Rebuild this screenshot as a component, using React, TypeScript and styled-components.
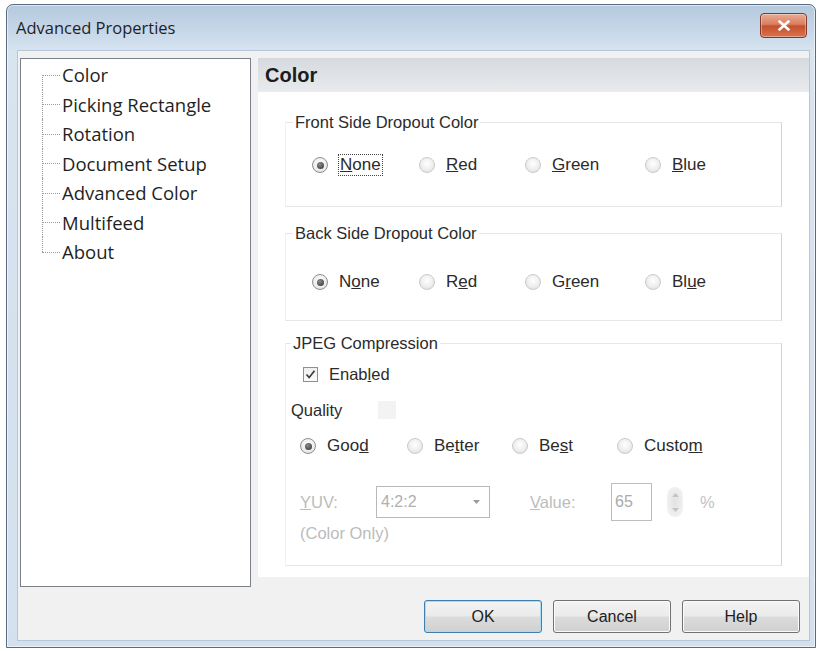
import React from "react";
import styled, { createGlobalStyle } from "styled-components";

const GlobalStyle = createGlobalStyle`
  html, body { margin: 0; padding: 0; background: #ffffff; }
  body { font-family: "Liberation Sans", Arial, sans-serif; color: #2b2b2b; }
  * { box-sizing: border-box; }
`;

const Page = styled.div`
  height: 651px;
  padding: 4px 4px 3px 6px;
`;

const Window = styled.div`
  height: 644px;
  display: flex;
  flex-direction: column;
  border: 1px solid #5a6b7d;
  border-radius: 7px 7px 0 0;
  background: linear-gradient(180deg, #b5c9de 0px, #c6d7e8 26px, #d8e4f0 46px, #d3e0ed 100%);
  box-shadow: inset 0 0 0 1px rgba(255, 255, 255, 0.55);
`;

const TitleBar = styled.div`
  height: 45px;
  flex: none;
  display: flex;
  align-items: center;
  justify-content: space-between;
  padding: 0 8px 0 9px;
`;

const Title = styled.span`
  font-family: "Open Sans", "Liberation Sans", sans-serif;
  font-size: 16.5px;
  color: #1f1f1f;
`;

const CloseButton = styled.div`
  align-self: flex-start;
  margin-top: 8px;
  width: 47px;
  height: 25px;
  display: flex;
  align-items: center;
  justify-content: center;
  border: 1px solid #7d3b2c;
  border-radius: 4px;
  background: linear-gradient(180deg, #e9ad94 0%, #da7d5e 45%, #c5502e 52%, #d8744b 100%);
  box-shadow: inset 0 0 0 1px rgba(255, 255, 255, 0.35);
`;

const Client = styled.div`
  flex: 1;
  margin: 0 5px 6px 10px;
  padding: 7px 0 0 2px;
  border: 1px solid #b7c7d7;
  background: #f1f1f1;
  display: flex;
  flex-direction: column;
`;

const MainRow = styled.div`
  display: flex;
  align-items: flex-start;
  gap: 7px;
`;

const Tree = styled.div`
  width: 231px;
  height: 529px;
  flex: none;
  padding-top: 1px;
  border: 1px solid #7b8088;
  background: #ffffff;
`;

const TreeItem = styled.div`
  height: 29.5px;
  display: flex;
  align-items: stretch;
  font-family: "Open Sans", "Liberation Sans", sans-serif;
  font-size: 18.5px;
  color: #1f1f1f;
`;

const Connector = styled.span<{ $first?: boolean; $last?: boolean }>`
  position: relative;
  width: 18px;
  margin-left: 21px;
  flex: none;
  &::before {
    content: "";
    position: absolute;
    left: 0;
    top: ${(p) => (p.$first ? "50%" : "0")};
    bottom: ${(p) => (p.$last ? "50%" : "0")};
    border-left: 1px dotted #9a9a9a;
  }
  &::after {
    content: "";
    position: absolute;
    left: 0;
    right: 0;
    top: 50%;
    border-top: 1px dotted #9a9a9a;
  }
`;

const TreeLabel = styled.span`
  display: flex;
  align-items: center;
  padding-left: 2px;
`;

const Panel = styled.div`
  flex: 1;
  height: 519px;
  display: flex;
  flex-direction: column;
  background: #ffffff;
`;

const PanelHeader = styled.div`
  height: 34px;
  flex: none;
  display: flex;
  align-items: center;
  padding-left: 7px;
  background: linear-gradient(180deg, #d6dadf 0%, #dfe2e6 50%, #e9ebed 100%);
  font-size: 20px;
  font-weight: bold;
  color: #1c1c1c;
`;

const PanelBody = styled.div`
  flex: 1;
  padding: 0 27px;
`;

const Group = styled.fieldset<{ $top: number; $pt: number; $pb: number }>`
  margin: ${(p) => p.$top}px 0 0 0;
  padding: ${(p) => p.$pt}px 0 ${(p) => p.$pb}px 0;
  min-width: 0;
  border: 1px solid #e6e6e6;
  border-left-color: #f0f0f0;
  border-right-color: #d4d4d4;
`;

const Legend = styled.legend<{ $indent: number }>`
  margin-left: ${(p) => p.$indent}px;
  padding: 0 2px;
  font-size: 16.5px;
  line-height: 20px;
  color: #2b2b2b;
`;

const RadioRow = styled.div<{ $cols: string; $indent: number }>`
  display: grid;
  grid-template-columns: ${(p) => p.$cols};
  padding-left: ${(p) => p.$indent}px;
  height: 20px;
  align-items: center;
`;

const Option = styled.label`
  display: flex;
  align-items: center;
  gap: 11px;
  font-size: 17px;
  color: #2b2b2b;
  white-space: nowrap;
`;

const RadioDot = styled.span<{ $checked?: boolean }>`
  width: 16px;
  height: 16px;
  flex: none;
  border-radius: 50%;
  display: flex;
  align-items: center;
  justify-content: center;
  border: 1px solid ${(p) => (p.$checked ? "#8d8e8f" : "#cacaca")};
  background: radial-gradient(circle at 50% 40%, #ffffff 0%, #eeeeee 55%, #d9d9d9 100%);
  &::after {
    content: "";
    display: ${(p) => (p.$checked ? "block" : "none")};
    width: 7px;
    height: 7px;
    border-radius: 50%;
    background: radial-gradient(circle at 40% 35%, #8c8c8c, #2e2e2e);
  }
`;

const Focus = styled.span`
  outline: 1px dotted #444;
  outline-offset: 0;
  padding: 0 1px;
`;

const Row = styled.div<{ $top: number; $indent: number; $height?: number }>`
  display: flex;
  align-items: center;
  margin-top: ${(p) => p.$top}px;
  padding-left: ${(p) => p.$indent}px;
  height: ${(p) => p.$height ?? 20}px;
  font-size: 16.5px;
`;

const CheckBox = styled.span`
  width: 15px;
  height: 15px;
  flex: none;
  margin-right: 11px;
  display: flex;
  align-items: center;
  justify-content: center;
  border: 1px solid #8f8f8f;
  background: linear-gradient(180deg, #eeeeee, #fbfbfb);
`;

const GhostBox = styled.span`
  width: 18px;
  height: 18px;
  margin-left: 36px;
  background: #f3f3f3;
`;

const Disabled = styled.span<{ $width?: number; $gap?: number }>`
  color: #bcbcbc;
  width: ${(p) => (p.$width ? `${p.$width}px` : "auto")};
  margin-left: ${(p) => p.$gap ?? 0}px;
  flex: none;
`;

const SelectBox = styled.div`
  width: 114px;
  height: 32px;
  flex: none;
  display: flex;
  align-items: center;
  justify-content: space-between;
  padding: 0 9px 0 4px;
  border: 1px solid #b8b8b8;
  background: #ffffff;
  color: #b0b0b0;
  font-size: 16px;
`;

const ValueBox = styled.div`
  width: 41px;
  height: 38px;
  flex: none;
  display: flex;
  align-items: center;
  padding-left: 3px;
  border: 1px solid #bdbdbd;
  color: #ababab;
  font-size: 16px;
`;

const Spinner = styled.div`
  width: 16px;
  height: 30px;
  flex: none;
  margin-left: 15px;
  display: flex;
  flex-direction: column;
  align-items: center;
  justify-content: space-around;
  border-radius: 8px;
  background: radial-gradient(ellipse at center, #e2e2e2 0%, #eeeeee 60%, #f8f8f8 100%);
`;

const Percent = styled.span`
  margin-left: 17px;
  color: #c2c2c2;
`;

const ButtonRow = styled.div`
  display: flex;
  justify-content: flex-end;
  gap: 11px;
  margin-top: 13px;
  padding-right: 9px;
`;

const Button = styled.button<{ $default?: boolean }>`
  width: 118px;
  height: 33px;
  border: 1px solid ${(p) => (p.$default ? "#3d7fae" : "#727272")};
  border-radius: 3px;
  background: linear-gradient(180deg, #f3f3f3 0%, #ebebeb 48%, #dcdcdc 52%, #d0d0d0 100%);
  box-shadow: inset 0 0 0 1px ${(p) => (p.$default ? "#a6dcf6" : "#fbfbfb")};
  font-family: "Liberation Sans", Arial, sans-serif;
  font-size: 16px;
  color: #1e1e1e;
  padding: 0;
`;

const treeItems = [
  "Color",
  "Picking Rectangle",
  "Rotation",
  "Document Setup",
  "Advanced Color",
  "Multifeed",
  "About",
];

type Choice = { pre: string; key: string; post: string; checked?: boolean; focus?: boolean };

const frontChoices: Choice[] = [
  { pre: "", key: "N", post: "one", checked: true, focus: true },
  { pre: "", key: "R", post: "ed" },
  { pre: "", key: "G", post: "reen" },
  { pre: "", key: "B", post: "lue" },
];

const backChoices: Choice[] = [
  { pre: "N", key: "o", post: "ne", checked: true },
  { pre: "R", key: "e", post: "d" },
  { pre: "G", key: "r", post: "een" },
  { pre: "Bl", key: "u", post: "e" },
];

const qualityChoices: Choice[] = [
  { pre: "Goo", key: "d", post: "", checked: true },
  { pre: "Be", key: "t", post: "ter" },
  { pre: "Be", key: "s", post: "t" },
  { pre: "Custo", key: "m", post: "" },
];

const Choices = ({ items, cols, indent }: { items: Choice[]; cols: string; indent: number }) => (
  <RadioRow $cols={cols} $indent={indent}>
    {items.map((c) => {
      const text = (
        <>
          {c.pre}
          <u>{c.key}</u>
          {c.post}
        </>
      );
      return (
        <Option key={c.pre + c.key + c.post}>
          <RadioDot $checked={c.checked} />
          {c.focus ? <Focus>{text}</Focus> : <span>{text}</span>}
        </Option>
      );
    })}
  </RadioRow>
);

const Arrow = ({ up, color }: { up?: boolean; color: string }) => (
  <svg width="7" height="4" viewBox="0 0 7 4">
    <path d={up ? "M0 4 L3.5 0 L7 4 Z" : "M0 0 L3.5 4 L7 0 Z"} fill={color} />
  </svg>
);

const App = () => {
  return (
    <>
      <GlobalStyle />
      <Page>
        <Window>
          <TitleBar>
            <Title>Advanced Properties</Title>
            <CloseButton>
              <svg width="12" height="11" viewBox="0 0 12 11">
                <path d="M1.5 1.5 L10.5 9.5 M10.5 1.5 L1.5 9.5" stroke="#ffffff" strokeWidth="2.6" strokeLinecap="round" />
              </svg>
            </CloseButton>
          </TitleBar>
          <Client>
            <MainRow>
              <Tree>
                {treeItems.map((name, i) => (
                  <TreeItem key={name}>
                    <Connector $first={i === 0} $last={i === treeItems.length - 1} />
                    <TreeLabel>{name}</TreeLabel>
                  </TreeItem>
                ))}
              </Tree>
              <Panel>
                <PanelHeader>Color</PanelHeader>
                <PanelBody>
                  <Group $top={20} $pt={23} $pb={31}>
                    <Legend $indent={7}>Front Side Dropout Color</Legend>
                    <Choices items={frontChoices} cols="107px 106px 120px auto" indent={26} />
                  </Group>
                  <Group $top={16} $pt={29} $pb={28}>
                    <Legend $indent={7}>Back Side Dropout Color</Legend>
                    <Choices items={backChoices} cols="107px 106px 120px auto" indent={26} />
                  </Group>
                  <Group $top={12} $pt={0} $pb={22}>
                    <Legend $indent={5}>JPEG Compression</Legend>
                    <Row $top={11} $indent={17}>
                      <CheckBox>
                        <svg width="11" height="11" viewBox="0 0 11 11">
                          <path d="M1.5 5.5 L4.2 8.5 L9.5 1.8" stroke="#3a3a3a" strokeWidth="1.7" fill="none" />
                        </svg>
                      </CheckBox>
                      <span>
                        Enab<u>l</u>ed
                      </span>
                    </Row>
                    <Row $top={16} $indent={5}>
                      <span>Quality</span>
                      <GhostBox />
                    </Row>
                    <Row $top={16} $indent={0}>
                      <Choices items={qualityChoices} cols="107px 105px 105px auto" indent={14} />
                    </Row>
                    <Row $top={27} $indent={14} $height={38}>
                      <Disabled $width={76}>
                        <u>Y</u>UV:
                      </Disabled>
                      <SelectBox>
                        <span>4:2:2</span>
                        <Arrow color="#9a9a9a" />
                      </SelectBox>
                      <Disabled $width={81} $gap={40}>
                        <u>V</u>alue:
                      </Disabled>
                      <ValueBox>65</ValueBox>
                      <Spinner>
                        <Arrow up color="#c4c4c4" />
                        <Arrow color="#c4c4c4" />
                      </Spinner>
                      <Percent>%</Percent>
                    </Row>
                    <Row $top={2} $indent={14}>
                      <Disabled>(Color Only)</Disabled>
                    </Row>
                  </Group>
                </PanelBody>
              </Panel>
            </MainRow>
            <ButtonRow>
              <Button $default>OK</Button>
              <Button>Cancel</Button>
              <Button>Help</Button>
            </ButtonRow>
          </Client>
        </Window>
      </Page>
    </>
  );
};

export default App;
